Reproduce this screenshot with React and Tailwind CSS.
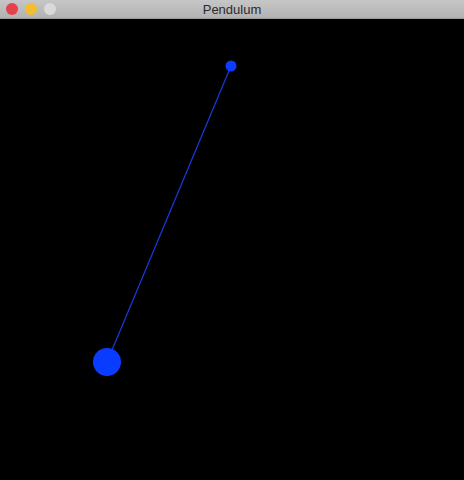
export default function App() {
  return (
    <div className="w-[464px] h-[480px] flex flex-col bg-black overflow-hidden" style={{ fontFamily: '"Liberation Sans", Arial, sans-serif' }}>
      <div className="relative h-[19px] shrink-0 flex items-center justify-center bg-gradient-to-b from-[#c6c6c6] to-[#b2b2b2] border-b border-[#9a9a9a]">
        <div className="absolute left-[6px] top-[3px] flex gap-[7px]">
          <div className="w-[12px] h-[12px] rounded-full bg-[#e5424c]" />
          <div className="w-[12px] h-[12px] rounded-full bg-[#f2bd2e]" />
          <div className="w-[12px] h-[12px] rounded-full bg-[#dadada]" />
        </div>
        <span className="text-[13px] leading-none text-[#2b2b2b]">Pendulum</span>
      </div>
      <div className="flex-1">
        <svg width="464" height="461" viewBox="0 0 464 461" className="block">
          <line x1="231" y1="47" x2="107" y2="343" stroke="#1a3ae0" strokeWidth="1.2" />
          <circle cx="231" cy="47" r="5.5" fill="#0a3cff" />
          <circle cx="107" cy="343" r="14" fill="#0a3cff" />
        </svg>
      </div>
    </div>
  );
}
